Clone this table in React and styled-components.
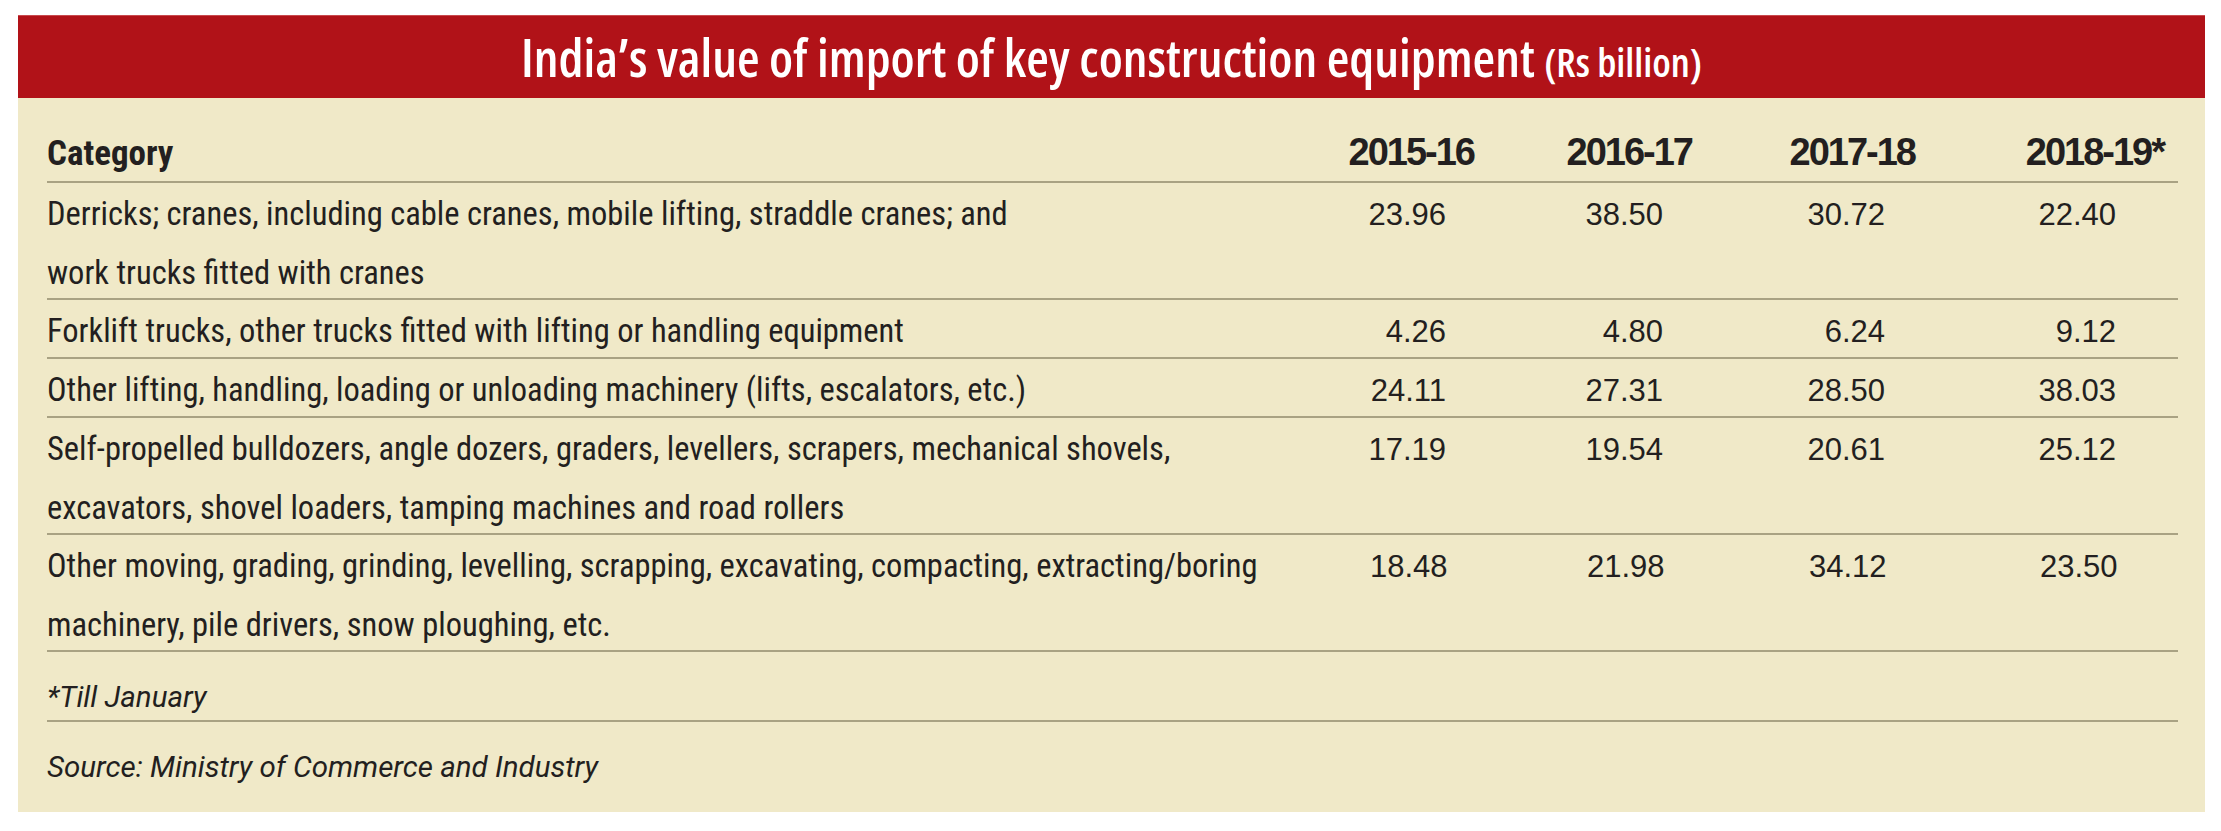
import React from 'react'
import styled, { createGlobalStyle } from 'styled-components'

const GlobalStyle = createGlobalStyle`
  body {
    margin: 0;
    background: #fff;
    color: #231f20;
  }
`

const rows = [
  {
    lines: ['Derricks; cranes, including cable cranes, mobile lifting, straddle cranes; and', 'work trucks fitted with cranes'],
    values: ['23.96', '38.50', '30.72', '22.40'],
  },
  {
    lines: ['Forklift trucks, other trucks fitted with lifting or handling equipment'],
    values: ['4.26', '4.80', '6.24', '9.12'],
  },
  {
    lines: ['Other lifting, handling, loading or unloading machinery (lifts, escalators, etc.)'],
    values: ['24.11', '27.31', '28.50', '38.03'],
  },
  {
    lines: ['Self-propelled bulldozers, angle dozers, graders, levellers, scrapers, mechanical shovels,', 'excavators, shovel loaders, tamping machines and road rollers'],
    values: ['17.19', '19.54', '20.61', '25.12'],
  },
  {
    lines: ['Other moving, grading, grinding, levelling, scrapping, excavating, compacting, extracting/boring', 'machinery, pile drivers, snow ploughing, etc.'],
    values: ['18.48', '21.98', '34.12', '23.50'],
  },
]

const years = ['2015-16', '2016-17', '2017-18', '2018-19*']
// values sit a little left of the header's right edge
const valueInset = [28, 29, 30, 48]

export default function App() {
  return (
    <>
      <GlobalStyle />
      <Panel>
        <TitleBar>
          <Title>
            India’s value of import of key construction equipment <Unit>(Rs billion)</Unit>
          </Title>
        </TitleBar>
        <Table>
          <HeadRow>
            <CategoryHead>Category</CategoryHead>
            {years.map((y) => (
              <YearHead key={y}>{y}</YearHead>
            ))}
          </HeadRow>
          {rows.map((row, r) => (
            <Row key={r}>
              <Category>
                {row.lines.map((l, i) => (
                  <CategoryLine key={i}>{l}</CategoryLine>
                ))}
              </Category>
              {row.values.map((v, i) => (
                <Value key={i} $inset={valueInset[i]}>{v}</Value>
              ))}
            </Row>
          ))}
          <Note $ruled>*Till January</Note>
          <Note>Source: Ministry of Commerce and Industry</Note>
        </Table>
      </Panel>
    </>
  )
}

const Panel = styled.div`
  margin: 15px 0 0 18px;
  width: 2187px;
  background: #f0e9c8;
  padding-bottom: 22px;
`

const TitleBar = styled.div`
  box-sizing: border-box;
  height: 83px;
  padding-top: 4px;
  background: #b11218;
  border-top: 1px solid #c84a4e;
  display: flex;
  align-items: center;
  justify-content: center;
`

const Title = styled.h1`
  margin: 0;
  font-family: "Open Sans", "Liberation Sans", sans-serif;
  font-stretch: 75%;
  font-weight: 600;
  font-size: 52px;
  line-height: 60px;
  color: #fff;
  white-space: nowrap;
`

const Unit = styled.span`
  font-size: 40px;
`

const Table = styled.div`
  padding: 0 27px 0 29px;
`

const Grid = styled.div`
  display: grid;
  grid-template-columns: 1fr 218px 218px 223px 249px;
  padding-right: 14px;
  border-bottom: 2px solid #a9a283;
`

const HeadRow = styled(Grid)`
  align-items: baseline;
  padding-top: 34px;
  padding-bottom: 7px;
  line-height: 40px;
`

const CategoryHead = styled.div`
  font-family: Roboto, "Liberation Sans", sans-serif;
  font-stretch: 75%;
  font-weight: 700;
  font-size: 35px;
`

const YearHead = styled.div`
  text-align: right;
  font-family: "Liberation Sans", Arial, sans-serif;
  font-weight: 700;
  font-size: 38px;
  letter-spacing: -2px;
  white-space: nowrap;
`

const Row = styled(Grid)`
  align-items: baseline;
  padding-top: 6px;
  line-height: 50px;
`

const Category = styled.div`
  font-family: Roboto, "Liberation Sans", sans-serif;
  font-stretch: 75%;
  font-size: 32.5px;
`

const CategoryLine = styled.div`
  white-space: nowrap;

  & + & {
    margin-top: 9px;
  }
`

const Value = styled.div`
  text-align: right;
  padding-right: ${(p) => p.$inset}px;
  font-family: "Liberation Sans", Arial, sans-serif;
  font-size: 31px;
`

const Note = styled.div`
  padding-top: 22px;
  line-height: 46px;
  font-family: Roboto, "Liberation Sans", sans-serif;
  font-style: italic;
  font-size: 29.5px;
  border-bottom: ${(p) => (p.$ruled ? '2px solid #a9a283' : 'none')};
`
